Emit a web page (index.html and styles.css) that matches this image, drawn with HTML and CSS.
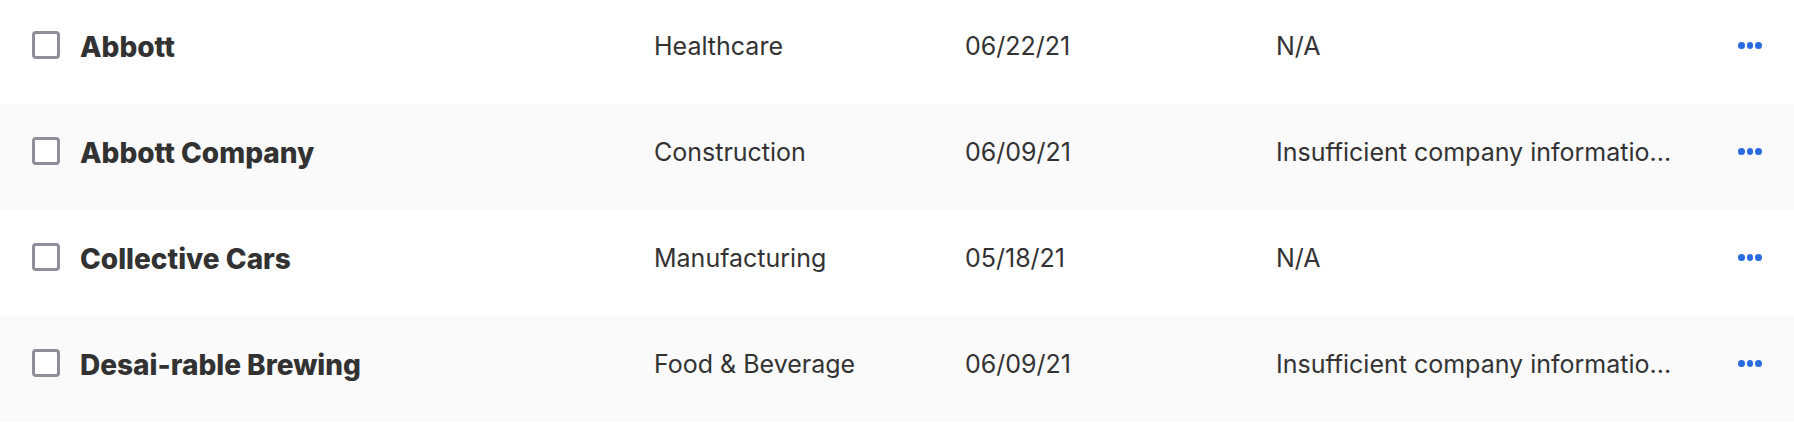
FILE: index.html
```html
<!DOCTYPE html>
<html>
<head>
<meta charset="utf-8">
<link rel="stylesheet" href="styles.css">
</head>
<body>
<div class="table">
  <div class="row">
    <span class="check"></span>
    <span class="name">Abbott</span>
    <span class="cell">Healthcare</span>
    <span class="cell">06/22/21</span>
    <span class="cell reason">N/A</span>
    <span class="more"><i></i><i></i><i></i></span>
  </div>
  <div class="row alt">
    <span class="check"></span>
    <span class="name">Abbott Company</span>
    <span class="cell">Construction</span>
    <span class="cell">06/09/21</span>
    <span class="cell reason">Insufficient company informatio...</span>
    <span class="more"><i></i><i></i><i></i></span>
  </div>
  <div class="row">
    <span class="check"></span>
    <span class="name">Collective Cars</span>
    <span class="cell">Manufacturing</span>
    <span class="cell">05/18/21</span>
    <span class="cell reason">N/A</span>
    <span class="more"><i></i><i></i><i></i></span>
  </div>
  <div class="row alt">
    <span class="check"></span>
    <span class="name">Desai-rable Brewing</span>
    <span class="cell">Food &amp; Beverage</span>
    <span class="cell">06/09/21</span>
    <span class="cell reason">Insufficient company informatio...</span>
    <span class="more"><i></i><i></i><i></i></span>
  </div>
</div>
</body>
</html>
```
FILE: styles.css
```css
html, body {
  margin: 0;
  padding: 0;
  background: #ffffff;
}
body {
  font-family: Inter, "Noto Sans", sans-serif;
  color: #333333;
  overflow: hidden;
}
.table {
  margin-top: -2px;
}
.row {
  display: grid;
  grid-template-columns: 48px 574px 311px 311px 462px 24px;
  align-items: center;
  height: 106px;
  box-sizing: border-box;
  padding: 0 32px 10px 32px;
  background: #ffffff;
}
.row.alt {
  background: #fafafa;
}
.check {
  width: 28px;
  height: 28px;
  box-sizing: border-box;
  border: 3px solid #8f8e9a;
  border-radius: 4px;
  background: #ffffff;
  margin-top: -2px;
}
.name {
  font-size: 28px;
  font-weight: 800;
  color: #323232;
  padding-top: 2px;
}
.cell {
  font-size: 25px;
  font-weight: 400;
  color: #333333;
}
.reason {
  white-space: nowrap;
}
.more {
  display: flex;
  gap: 2px;
  align-items: center;
  margin-top: -2px;
}
.more i {
  width: 7px;
  height: 7px;
  border-radius: 50%;
  background: #2b6be0;
}
```
